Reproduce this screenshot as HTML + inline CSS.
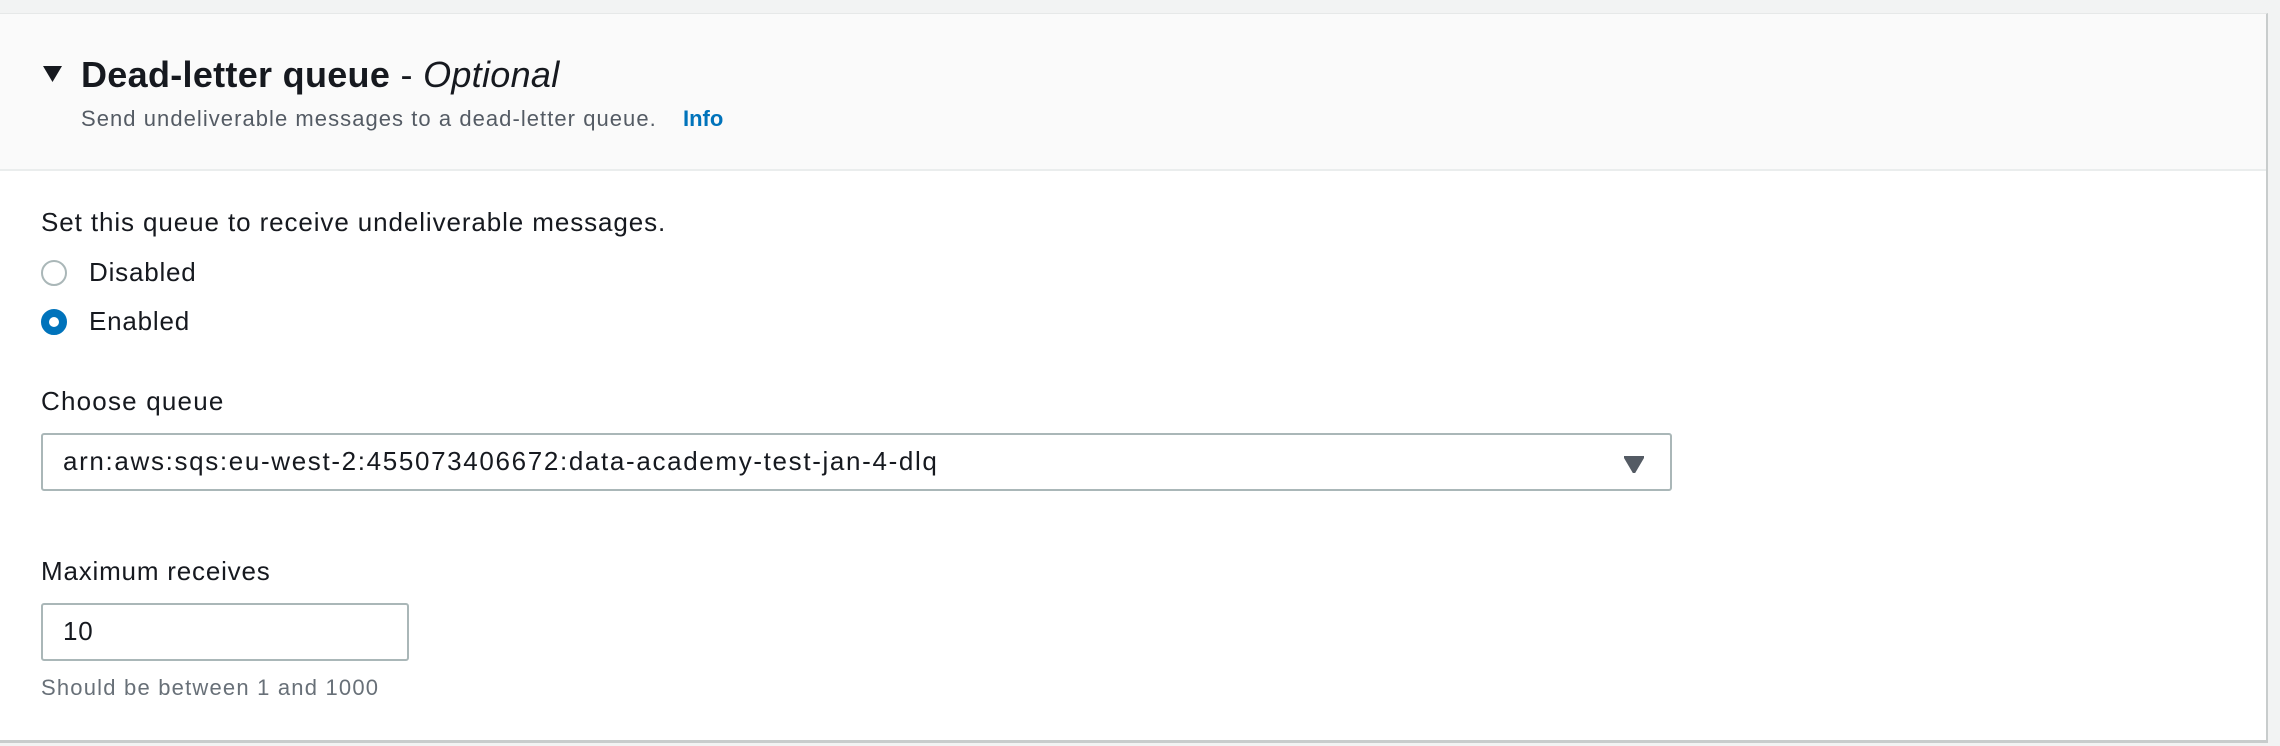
<!DOCTYPE html>
<html><head><meta charset="utf-8"><style>
*{margin:0;padding:0;box-sizing:border-box}
body{width:2280px;height:746px;background:#f2f3f3;font-family:"Liberation Sans",sans-serif;position:relative;overflow:hidden;color:#16191f}
.card{position:absolute;left:0;top:13px;width:2268px;height:730px;background:#fff;border-top:1px solid #e6e8e8;border-right:2px solid #c8cccc;border-bottom:3px solid #c8cccc}
.hdr{position:absolute;left:0;top:0;width:100%;height:157px;background:#fafafa;border-bottom:2px solid #eaeded}
.a{position:absolute;white-space:nowrap}
.t{font-size:26px;letter-spacing:0.8px}
.radio{position:absolute;width:26px;height:26px;border-radius:50%}
.box{position:absolute;border:2px solid #aab7b8;border-radius:3px;background:#fff}
</style></head><body>
<div class="card">
 <div class="hdr">
  <svg class="a" style="left:43px;top:52px" width="19" height="16"><polygon points="0,0 19,0 9.5,16" fill="#16191f"/></svg>
  <div class="a" style="left:81px;top:40px;font-size:36px;font-weight:bold;letter-spacing:0.3px">Dead-letter queue <span style="font-weight:normal">- <i>Optional</i></span></div>
  <div class="a" style="left:81px;top:92px;font-size:22px;letter-spacing:1.05px;color:#545b64">Send undeliverable messages to a dead-letter queue.</div>
  <div class="a" style="left:683px;top:92px;font-size:22px;color:#0073bb;font-weight:bold">Info</div>
 </div>
 <div class="a t" style="left:41px;top:193px;letter-spacing:0.9px">Set this queue to receive undeliverable messages.</div>
 <div class="radio" style="left:41px;top:246px;border:2px solid #aab7b8"></div>
 <div class="a t" style="left:89px;top:243px">Disabled</div>
 <div class="radio" style="left:41px;top:295px;border:8px solid #0073bb;background:#fff"></div>
 <div class="a t" style="left:89px;top:292px">Enabled</div>
 <div class="a t" style="left:41px;top:372px;letter-spacing:1.2px">Choose queue</div>
 <div class="box" style="left:41px;top:419px;width:1631px;height:58px"></div>
 <div class="a t" style="left:63px;top:432px;letter-spacing:1.65px">arn:aws:sqs:eu-west-2:455073406672:data-academy-test-jan-4-dlq</div>
 <svg class="a" style="left:1624px;top:442px" width="20" height="17"><polygon points="0,0 20,0 10,17" fill="#545b64" stroke="#545b64" stroke-linejoin="round" stroke-width="2"/></svg>
 <div class="a t" style="left:41px;top:542px">Maximum receives</div>
 <div class="box" style="left:41px;top:589px;width:368px;height:58px"></div>
 <div class="a t" style="left:63px;top:602px">10</div>
 <div class="a" style="left:41px;top:661px;font-size:22px;letter-spacing:1.2px;color:#687078">Should be between 1 and 1000</div>
</div>
</body></html>
